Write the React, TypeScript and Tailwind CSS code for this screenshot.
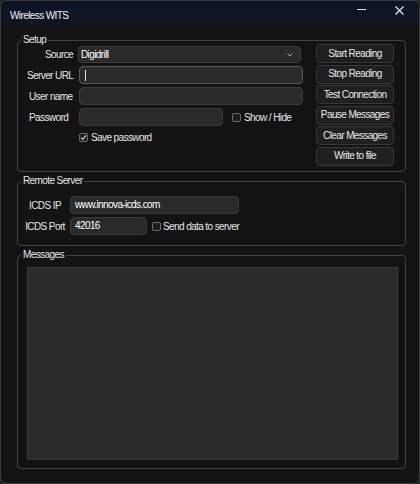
import { FC, ReactNode } from "react";

const Check: FC<{ checked?: boolean }> = ({ checked }) => (
	<span className="flex h-[9px] w-[9px] items-center justify-center rounded-[2px] border border-[#6a6a6a] bg-[#1c1c1c]">
		{checked && (
			<svg width="7" height="7" viewBox="0 0 7 7" fill="none">
				<path d="M1 3.6 L2.8 5.4 L6 1.4" stroke="#d8d8d8" strokeWidth="1.1" />
			</svg>
		)}
	</span>
);

const Group: FC<{ title: string; className: string; children: ReactNode }> = ({
	title,
	className,
	children,
}) => (
	<fieldset
		className={`mx-[16px] w-[389px] rounded-[4px] border border-[#424242] ${className}`}
	>
		<legend className="ml-[3px] px-[2px] leading-[12px] text-[#e4e4e4]">{title}</legend>
		{children}
	</fieldset>
);

const buttons = [
	"Start Reading",
	"Stop Reading",
	"Test Connection",
	"Pause Messages",
	"Clear Messages",
	"Write to file",
];

const input = "rounded-[4px] border border-[#3a3a3a] bg-[#2a2a2a]";

export default function App() {
	return (
		<div className="h-[484px] w-[420px] bg-[#1b2a22] font-['Liberation_Sans',Arial,sans-serif] text-[10px] tracking-[-0.6px] whitespace-nowrap text-[#e6e6e6]">
			<div className="flex h-full w-full flex-col overflow-hidden rounded-[7px] border border-[#3c3c3c] bg-[#131313]">
				{/* title bar */}
				<div className="flex h-[24px] shrink-0 items-start bg-[#0e1522]">
					<span className="ml-[9px] mt-[9px] leading-[12px] text-[#f0f0f0]">Wireless WITS</span>
					<div className="ml-auto mr-[15px] mt-[5px] flex items-start gap-[29px]">
						<span className="mt-[3px] h-px w-[9px] bg-[#e0e0e0]" />
						<svg width="9" height="9" viewBox="0 0 9 9">
							<path d="M0.5 0.5 L8.5 8.5 M8.5 0.5 L0.5 8.5" stroke="#e8e8e8" strokeWidth="1.2" />
						</svg>
					</div>
				</div>

				<div className="flex flex-col pt-[9px]">
					<Group title="Setup" className="h-[138px]">
						<div className="flex">
							<div className="flex w-[298px] flex-col">
								<div className="flex h-[17px] items-center">
									<span className="ml-[9px] w-[46px] text-right">Source</span>
									<div className="ml-[5px] flex h-[17px] w-[223px] items-center rounded-[4px] border border-[#3a3a3a] bg-[#2a2a2a] pl-[2px] pr-[7px] text-white">
										<span>Digidrill</span>
										<svg className="ml-auto" width="6" height="4" viewBox="0 0 6 4" fill="none">
											<path d="M0.5 0.5 L3 3 L5.5 0.5" stroke="#a8a8a8" strokeWidth="1" />
										</svg>
									</div>
								</div>
								<div className="mt-[3px] flex h-[18px] items-center">
									<span className="ml-[9px] w-[46px] text-right">Server URL</span>
									<div className="ml-[6px] flex h-[18px] w-[224px] items-center rounded-[4px] border border-[#5a5a5a] bg-[#2a2a2a] pl-[5px]">
										<span className="h-[11px] w-px bg-[#e0e0e0]" />
									</div>
								</div>
								<div className="mt-[3px] flex h-[18px] items-center">
									<span className="ml-[11px] w-[44px]">User name</span>
									<div className={`ml-[6px] h-[18px] w-[224px] ${input}`} />
								</div>
								<div className="mt-[3px] flex h-[18px] items-center">
									<span className="ml-[11px] w-[44px]">Password</span>
									<div className={`ml-[6px] h-[18px] w-[144px] ${input}`} />
									<span className="ml-[9px]">
										<Check />
									</span>
									<span className="ml-[3px]">Show / Hide</span>
								</div>
								<div className="mt-[5px] flex h-[12px] items-center pl-[61px]">
									<Check checked />
									<span className="ml-[3px]">Save password</span>
								</div>
							</div>
							<div className="-mt-[2px] flex flex-col gap-[1.5px]">
								{buttons.map((b) => (
									<button
										key={b}
										type="button"
										className="h-[19px] w-[78px] rounded-[4px] border border-[#383838] bg-[#1f1f1f] leading-[12px] text-[#e8e8e8]"
									>
										{b}
									</button>
								))}
							</div>
						</div>
					</Group>

					<Group title="Remote Server" className="mt-[3px] h-[71px]">
						<div className="flex flex-col pt-[9px]">
							<div className="flex h-[18px] items-center">
								<span className="w-[52px] pl-[2px] text-center">ICDS IP</span>
								<div className={`h-[18px] w-[169px] px-[4px] leading-[16px] text-white ${input}`}>
									www.innova-icds.com
								</div>
							</div>
							<div className="mt-[3px] flex h-[18px] items-center">
								<span className="w-[52px] pl-[2px] text-center">ICDS Port</span>
								<div className={`h-[18px] w-[77px] px-[4px] leading-[16px] text-white ${input}`}>
									42016
								</div>
								<span className="ml-[5px]">
									<Check />
								</span>
								<span className="ml-[2px]">Send data to server</span>
							</div>
						</div>
					</Group>

					<Group title="Messages" className="mt-[3px] h-[220px]">
						<div className="ml-[9px] mt-[6px] h-[193px] w-[371px] border border-[#3a3a3a] bg-[#2a2a2a]" />
					</Group>
				</div>
			</div>
		</div>
	);
}
